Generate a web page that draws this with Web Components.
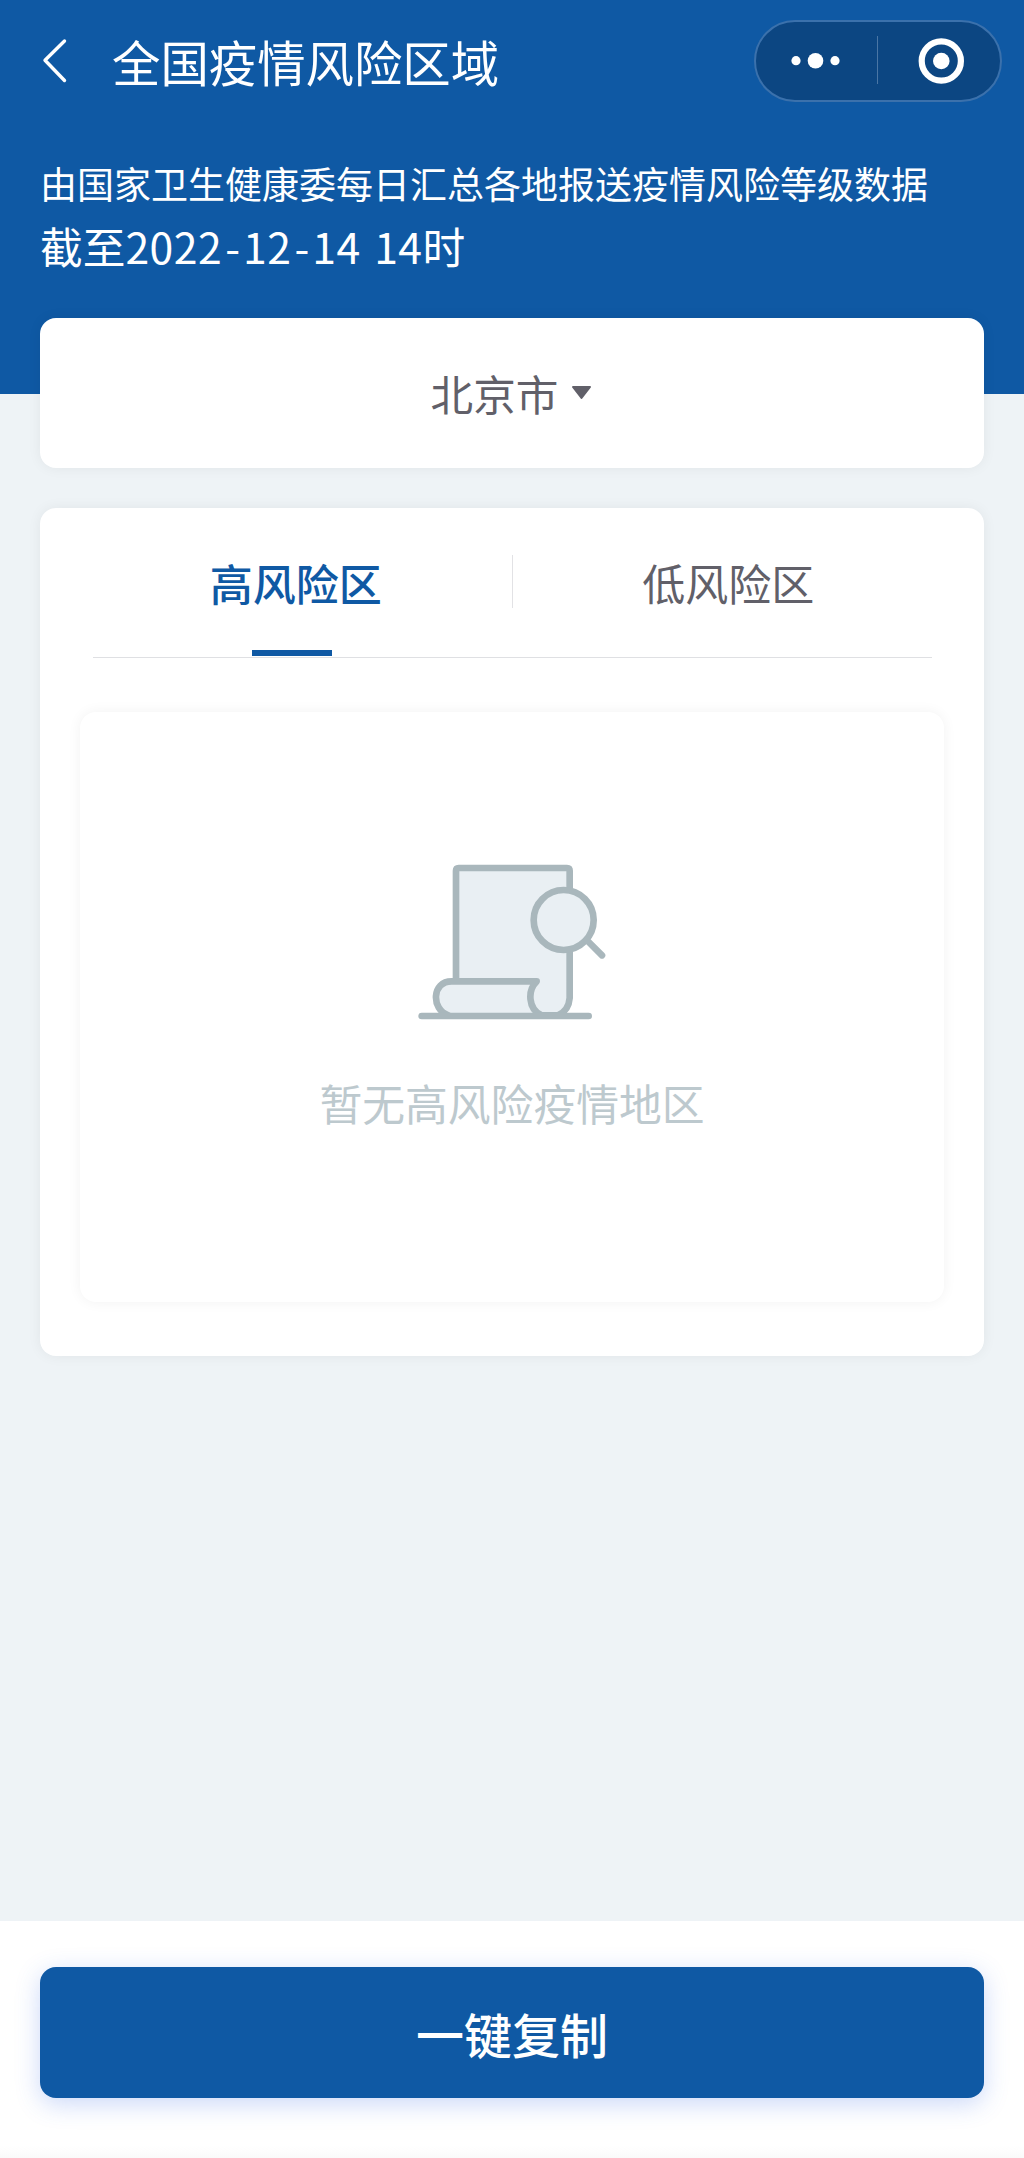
<!DOCTYPE html>
<html lang="zh-CN">
<head>
<meta charset="utf-8">
<title>全国疫情风险区域</title>
<style>
  html, body { margin: 0; padding: 0; }
  body { font-family: "Noto Sans CJK SC", sans-serif; background: #eef3f6; }
</style>
</head>
<body>
<risk-page></risk-page>
<script>
const define = (name, html) => {
  const t = document.createElement('template');
  t.innerHTML = '<style>*{box-sizing:border-box}</style>' + html;
  customElements.define(name, class extends HTMLElement {
    constructor() {
      super();
      this.attachShadow({ mode: 'open' }).append(t.content.cloneNode(true));
    }
  });
};

define('capsule-menu', `
  <style>
    :host { display: block; width: 248px; height: 82px; border: 2px solid #3b71ac; border-radius: 41px; background: #0c4682; box-sizing: border-box; }
    svg { display: block; }
  </style>
  <svg width="244" height="78" viewBox="2 2 244 78" fill="#fff">
    <circle cx="42" cy="40.7" r="4.6"/><circle cx="61.5" cy="40.7" r="7.8"/><circle cx="81" cy="40.7" r="4.6"/>
    <path d="M123.5 16v48" stroke="#4a76a5" stroke-width="1"/>
    <circle cx="187.3" cy="41" r="19.6" fill="none" stroke="#fff" stroke-width="6.2"/><circle cx="187.3" cy="41" r="8.3"/>
  </svg>`);

define('nav-bar', `
  <style>
    :host { display: flex; align-items: center; height: 122px; padding: 0 22px 0 40px; color: #fff; box-sizing: border-box; }
    .back { width: 32px; height: 48px; flex: none; }
    .title { margin-left: 40px; flex: 1; font-size: 48.4px; line-height: 70px; white-space: nowrap; }
  </style>
  <svg class="back" viewBox="0 0 32 48" fill="none" stroke="#fff" stroke-width="3.4" stroke-linecap="round" stroke-linejoin="round"><path d="M24.5 4 5 23.2 24.5 43.5"/></svg>
  <div class="title"><slot></slot></div>
  <capsule-menu></capsule-menu>`);

define('page-header', `
  <style>
    :host { display: block; height: 394px; background: #0f59a4; color: #fff; }
    .info { padding: 34px 40px 0; white-space: nowrap; }
    .desc { font-size: 37px; line-height: 54px; }
    .time { font-size: 42.7px; line-height: 62px; margin-top: 4px; }
    .n { letter-spacing: .5px; }
    .h { margin-left: 3px; letter-spacing: 3px; }
    .s { letter-spacing: 4px; }
  </style>
  <nav-bar>全国疫情风险区域</nav-bar>
  <div class="info">
    <div class="desc">由国家卫生健康委每日汇总各地报送疫情风险等级数据</div>
    <div class="time">截至<span class="n">2022<span class="h">-</span>12<span class="h">-</span>14<span class="s"> </span>14</span>时</div>
  </div>`);

define('region-picker', `
  <style>
    :host { display: flex; align-items: center; justify-content: center; height: 150px; background: #fff; border-radius: 16px; box-shadow: 0 0 14px rgba(0,0,0,.06); color: #616069; font-size: 42.6px; line-height: 60px; padding-right: 1px; box-sizing: border-box; }
    svg { margin-left: 13px; }
  </style>
  <span><slot></slot></span>
  <svg width="21" height="14" viewBox="0 0 21 14"><path d="M2 1h17L10.500 12z" fill="#616069" stroke="#616069" stroke-width="2" stroke-linejoin="round"/></svg>`);

define('tab-item', `
  <style>
    :host { display: flex; flex: 1; flex-direction: column; align-items: center; justify-content: space-between; height: 116px; font-size: 43px; line-height: 60px; color: #616069; }
    :host([active]) { color: #0f59a4; font-weight: 500; }
    i { width: 80px; height: 6px; margin-right: 7px; }
    :host([active]) i { background: #0f59a4; }
    .label { padding-top: 12px; }
  </style>
  <div class="label"><slot></slot></div><i></i>`);

define('tab-bar', `
  <style>
    :host { display: block; }
    .row { display: flex; height: 116px; }
    .sep { width: 1px; height: 53px; margin-top: 15px; background: #e2e2e5; }
    hr { margin: 1px 12px 0 13px; border: 0; height: 1px; background: #dfe0e3; }
  </style>
  <div class="row"><tab-item active>高风险区</tab-item><div class="sep"></div><tab-item>低风险区</tab-item></div><hr>`);

define('empty-state', `
  <style>
    :host { display: flex; flex-direction: column; align-items: center; height: 590px; margin-top: 54px; padding-top: 148px; border-radius: 16px; box-shadow: 0 0 14px rgba(0,0,0,.055); color: #bdc9ce; font-size: 42.8px; line-height: 60px; box-sizing: border-box; }
    .text { margin-top: 45px; }
    svg { display: block; flex: none; }
  </style>
  <svg width="200" height="167" viewBox="36 60 600 501" fill="#e9eff3" stroke="#a9b7bc" stroke-width="20" stroke-linecap="round" stroke-linejoin="round">
    <path d="M168 424V92q0-8 8-8H501q8 0 8 8V474Q506 512 474 526H424Z"/>
    <path d="M145 526C93 508 95 424 155 424H410C382 452 384 506 424 526"/>
    <path d="M65 528H566"/>
    <circle cx="491" cy="240" r="90"/>
    <path d="M560 300 606 346"/>
  </svg>
  <div class="text"><slot></slot></div>`);

define('risk-card', `
  <style>
    :host { display: block; height: 848px; margin-top: 40px; padding: 32px 40px 0; background: #fff; border-radius: 16px; box-shadow: 0 0 14px rgba(0,0,0,.06); box-sizing: border-box; }
  </style>
  <tab-bar></tab-bar>
  <empty-state>暂无高风险疫情地区</empty-state>`);

define('action-footer', `
  <style>
    :host { display: block; height: 237px; padding: 46px 40px 0; background: linear-gradient(#fff 225px, #fafafa); box-sizing: border-box; }
    button { display: block; width: 100%; height: 131px; border: 0; padding: 0; border-radius: 16px; background: #0f59a4; color: #fff; font: 500 48px/70px "Noto Sans CJK SC", sans-serif; box-shadow: 0 6px 24px rgba(50,105,230,.25); }
  </style>
  <button><slot></slot></button>`);

define('risk-page', `
  <style>
    :host { display: flex; flex-direction: column; width: 1024px; height: 2158px; background: #eef3f6; overflow: hidden; }
    main { flex: 1; padding: 0 40px; margin-top: -76px; }
  </style>
  <page-header></page-header>
  <main><region-picker>北京市</region-picker><risk-card></risk-card></main>
  <action-footer>一键复制</action-footer>`);
</script>
</body>
</html>
